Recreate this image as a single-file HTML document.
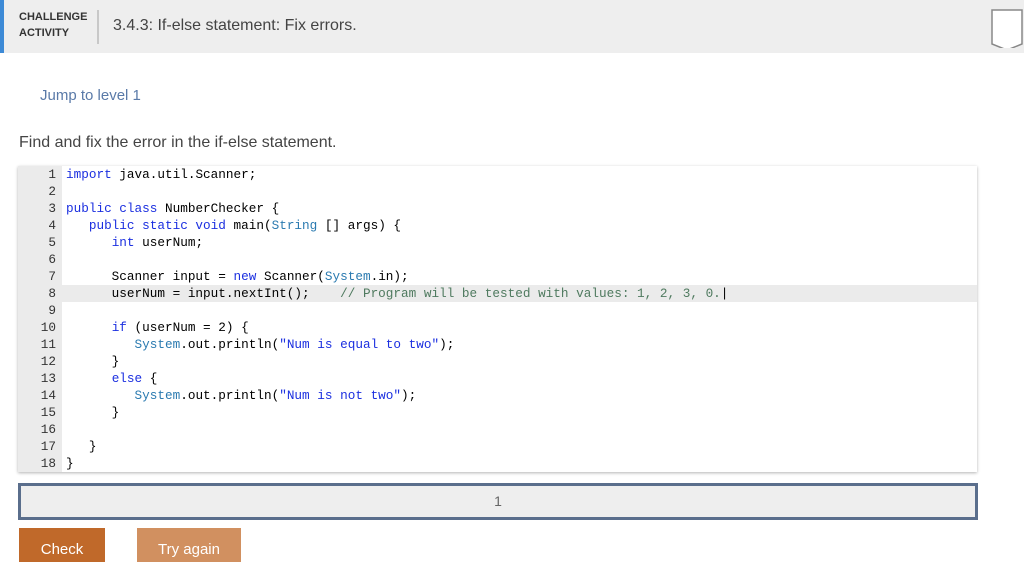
<!DOCTYPE html>
<html><head><style>
body{margin:0;width:1024px;height:562px;overflow:hidden;background:#fff;font-family:"Liberation Sans",sans-serif;position:relative}
.hdr{position:absolute;left:0;top:0;width:1024px;height:53px;background:#eeeeee}
.hdr .bl{position:absolute;left:0;top:0;width:4px;height:53px;background:#3d8ad6}
.ca{position:absolute;left:19px;top:9px;font-size:11px;font-weight:bold;color:#333;line-height:16px}
.sep{position:absolute;left:97px;top:10px;width:2px;height:34px;background:#c8c8c8}
.ttl{position:absolute;left:113px;top:17px;font-size:16px;color:#444}
.ic{position:absolute;left:990px;top:8px}
.jump{position:absolute;left:40px;top:87px;font-size:15px;color:#5a7aa8}
.find{position:absolute;left:19px;top:134px;font-size:16px;color:#444}
.ed{position:absolute;left:18px;top:166px;width:959px;height:306px;background:#fff;box-shadow:0 1px 3px rgba(0,0,0,.3)}
.gut{position:absolute;left:0;top:0;width:44px;height:306px;background:#ebebeb}
.ln{position:absolute;left:0;width:959px;height:17px;font-family:"Liberation Mono",monospace;font-size:12.7px;line-height:17px;white-space:pre;color:#000}
.ln .n{display:inline-block;width:38px;text-align:right;color:#333;margin-right:10px}
.k{color:#1b2fe0}.s{color:#1b2fe0}.t{color:#2a7ab0}.c{color:#4f7a5f}
.hl{background:#ebebeb}
.bar{position:absolute;left:18px;top:483px;width:954px;height:31px;border:3px solid #5a6e8c;background:#eeeeee;text-align:center;line-height:31px;font-size:14px;color:#666}
.btn{position:absolute;top:528px;height:34px;color:#fff;font-size:15px;text-align:center;line-height:44px}
</style></head><body>
<div class="hdr"><div class="bl"></div>
<div class="ca">CHALLENGE<br>ACTIVITY</div><div class="sep"></div>
<div class="ttl">3.4.3: If-else statement: Fix errors.</div>
<svg class="ic" width="34" height="40"><path d="M2 2H32V36L17 42L2 36Z" fill="#fff" stroke="#888" stroke-width="1.5"/></svg>
</div>
<div class="jump">Jump to level 1</div>
<div class="find">Find and fix the error in the if-else statement.</div>
<div class="ed"><div class="gut"></div>
<div class="ln" style="top:0"><span class="n">1</span><span class="k">import</span> java.util.Scanner;</div>
<div class="ln" style="top:17px"><span class="n">2</span></div>
<div class="ln" style="top:34px"><span class="n">3</span><span class="k">public class</span> NumberChecker {</div>
<div class="ln" style="top:51px"><span class="n">4</span>   <span class="k">public static void</span> main(<span class="t">String</span> [] args) {</div>
<div class="ln" style="top:68px"><span class="n">5</span>      <span class="k">int</span> userNum;</div>
<div class="ln" style="top:85px"><span class="n">6</span></div>
<div class="ln" style="top:102px"><span class="n">7</span>      Scanner input = <span class="k">new</span> Scanner(<span class="t">System</span>.in);</div>
<div class="ln hl" style="top:119px"><span class="n">8</span>      userNum = input.nextInt();    <span class="c">// Program will be tested with values: 1, 2, 3, 0.</span>|</div>
<div class="ln" style="top:136px"><span class="n">9</span></div>
<div class="ln" style="top:153px"><span class="n">10</span>      <span class="k">if</span> (userNum = 2) {</div>
<div class="ln" style="top:170px"><span class="n">11</span>         <span class="t">System</span>.out.println(<span class="s">"Num is equal to two"</span>);</div>
<div class="ln" style="top:187px"><span class="n">12</span>      }</div>
<div class="ln" style="top:204px"><span class="n">13</span>      <span class="k">else</span> {</div>
<div class="ln" style="top:221px"><span class="n">14</span>         <span class="t">System</span>.out.println(<span class="s">"Num is not two"</span>);</div>
<div class="ln" style="top:238px"><span class="n">15</span>      }</div>
<div class="ln" style="top:255px"><span class="n">16</span></div>
<div class="ln" style="top:272px"><span class="n">17</span>   }</div>
<div class="ln" style="top:289px"><span class="n">18</span>}</div>
</div>
<div class="bar">1</div>
<div class="btn" style="left:19px;width:86px;background:#c0692a">Check</div>
<div class="btn" style="left:137px;width:104px;background:#d19060">Try again</div>
</body></html>
